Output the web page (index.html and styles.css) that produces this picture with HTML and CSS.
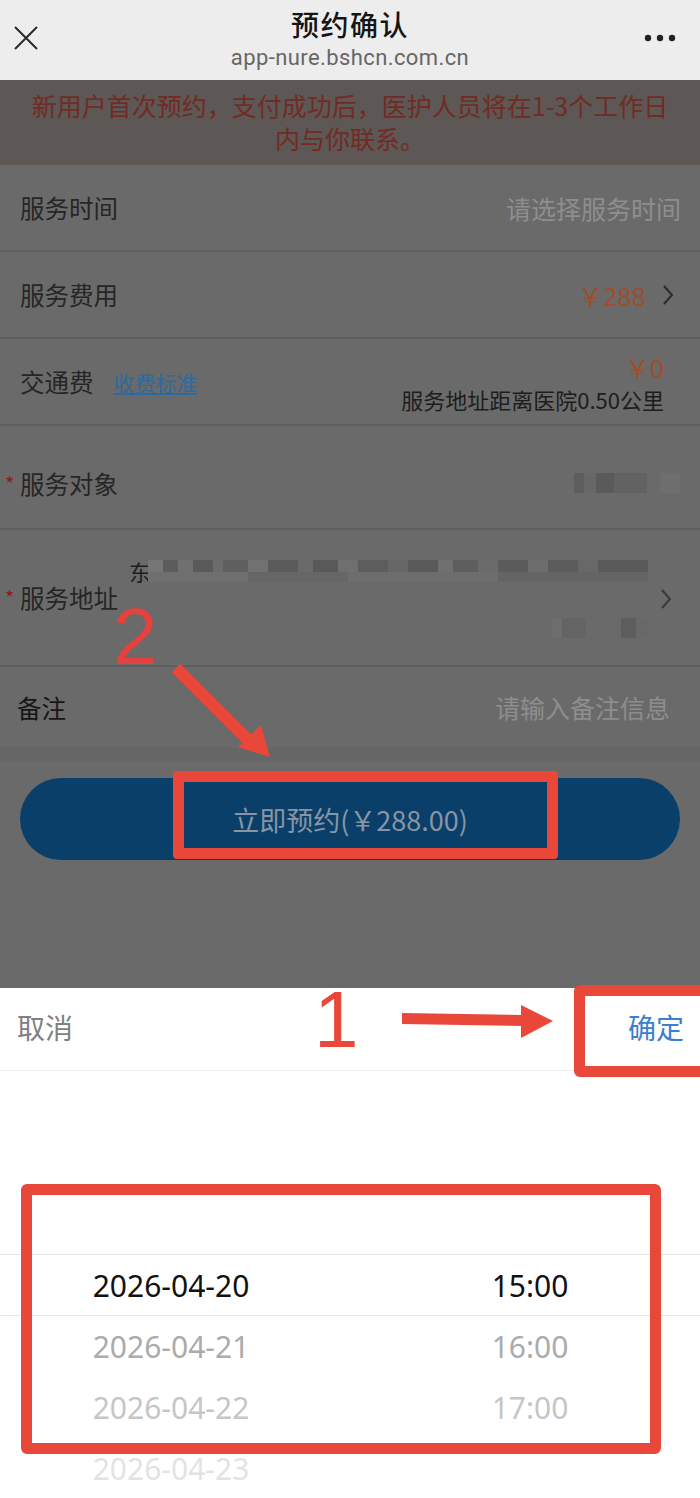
FILE: index.html
```html
<!DOCTYPE html>
<html lang="zh-CN">
<head>
<meta charset="utf-8">
<title>预约确认</title>
<link rel="stylesheet" href="styles.css">
</head>
<body>
<div class="phone">
  <header class="topbar">
    <svg class="close" width="26" height="24" viewBox="0 0 26 24"><path d="M2 1L24 23M24 1L2 23" stroke="#2a2a2a" stroke-width="2" fill="none"/></svg>
    <div class="titles">
      <div class="title">预约确认</div>
      <div class="url">app-nure.bshcn.com.cn</div>
    </div>
    <svg class="more" width="32" height="8" viewBox="0 0 32 8"><circle cx="4" cy="4" r="3.2" fill="#222"/><circle cx="16" cy="4" r="3.2" fill="#222"/><circle cx="28" cy="4" r="3.2" fill="#222"/></svg>
  </header>

  <main class="page">
    <div class="notice">新用户首次预约，支付成功后，医护人员将在1-3个工作日<br>内与你联系。</div>

    <section class="group">
      <div class="row">
        <span class="label">服务时间</span>
        <span class="placeholder">请选择服务时间</span>
      </div>
      <div class="row fee-row">
        <span class="label">服务费用</span>
        <span class="value"><span class="price">￥288</span><svg class="chev" width="12" height="22" viewBox="0 0 12 22"><path d="M2 2L10 11L2 20" stroke="#2b2b2b" stroke-width="2" fill="none"/></svg></span>
      </div>
      <div class="row">
        <span class="label">交通费<a class="link">收费标准</a></span>
        <div class="fee">
          <span class="price">￥0</span>
          <span class="dist">服务地址距离医院0.50公里</span>
        </div>
      </div>
    </section>

    <section class="group second">
      <div class="row obj">
        <span class="label"><i class="req">*</i>服务对象</span>
        <span class="value"><span class="blur name"></span><span class="blur faint"></span></span>
      </div>
      <div class="row addr">
        <span class="label"><i class="req">*</i>服务地址</span>
        <span class="value">
          <span class="addr-lines">
            <span class="line1"><span class="ch">东</span><span class="blur band"></span></span>
            <span class="blur band2"></span>
          </span>
          <svg class="chev dim" width="12" height="22" viewBox="0 0 12 22"><path d="M2 2L10 11L2 20" stroke="#3a3a3a" stroke-width="2" fill="none"/></svg>
        </span>
      </div>
      <div class="row memo">
        <span class="label dark">备注</span>
        <span class="placeholder">请输入备注信息</span>
      </div>
    </section>

    <div class="btn-area">
      <button class="submit">立即预约(￥288.00)</button>
    </div>
  </main>

  <div class="picker">
    <div class="picker-head">
      <span class="cancel">取消</span>
      <span class="ok">确定</span>
    </div>
    <div class="picker-body">
      <div class="prow"></div>
      <div class="prow"></div>
      <div class="prow"></div>
      <div class="prow sel"><span>2026-04-20</span><span>15:00</span></div>
      <div class="prow n1"><span>2026-04-21</span><span>16:00</span></div>
      <div class="prow n2"><span>2026-04-22</span><span>17:00</span></div>
      <div class="prow n3"><span>2026-04-23</span><span></span></div>
    </div>
  </div>

  <!-- annotations -->
  <div class="mark mark-btn"></div>
  <div class="mark mark-ok"></div>
  <div class="mark mark-picker"></div>
  <span class="num num-2">2</span>
  <span class="num num-1">1</span>
  <svg class="arrow arrow-2" width="120" height="120" viewBox="0 0 120 120">
    <path d="M6 8L80 82" stroke="#e8473a" stroke-width="12" stroke-linecap="butt"/>
    <polygon points="68,87 91,65 100,97" fill="#e8473a"/>
  </svg>
  <svg class="arrow arrow-1" width="170" height="50" viewBox="0 0 170 50">
    <polygon points="2,13 123,15 123,26 2,24" fill="#e8473a"/>
    <polygon points="121,5 153,21 121,38" fill="#e8473a"/>
  </svg>
</div>
</body>
</html>
```

FILE: styles.css
```css
* { box-sizing: border-box; }
html, body { margin: 0; padding: 0; }
body {
  font-family: "Noto Sans CJK SC", "Noto Sans", sans-serif;
  background: #fff;
}
.phone {
  position: relative;
  width: 700px;
  height: 1498px;
  overflow: hidden;
  background: #fff;
}

/* header */
.topbar {
  height: 80px;
  background: #ededed;
  display: grid;
  grid-template-columns: 80px 1fr 80px;
  align-items: center;
}
.close { margin-left: 13px; margin-top: -4px; }
.more { justify-self: end; margin-right: 24px; margin-top: -4px; }
.titles {
  display: flex;
  flex-direction: column;
  align-items: center;
  margin-top: -2px;
}
.title {
  font-size: 28px;
  line-height: 38px;
  font-weight: 500;
  color: #151515;
  letter-spacing: 1.5px;
}
.url {
  font-family: "Roboto", "Noto Sans", sans-serif;
  font-size: 22px;
  line-height: 30px;
  color: #666;
  letter-spacing: 0.4px;
}

/* dimmed page */
.page {
  height: 908px;
  background: #6a6a6a;
  overflow: hidden;
}
.notice {
  background: #5d5755;
  color: #722b22;
  font-size: 25px;
  line-height: 33px;
  text-align: center;
  padding: 9px 10px 10px;
}
.group { background: #6a6a6a; }
.group.second { margin-top: 12px; }
.row {
  height: 87px;
  padding: 0 19px 0 20px;
  display: flex;
  align-items: center;
  justify-content: space-between;
  border-bottom: 2px solid #5f5f5f;
}
.row.fee-row { padding-right: 26px; }
.label {
  font-size: 24.5px;
  color: #262626;
  display: flex;
  align-items: center;
  position: relative;
}
.label.dark { color: #161616; margin-left: -3px; }
.req {
  font-style: normal;
  color: #8c1c1c;
  font-size: 20px;
  position: absolute;
  left: -15px;
  top: 3px;
}
.link {
  font-size: 21px;
  color: #2f6a9c;
  text-decoration: underline;
  margin-left: 20px;
}
.placeholder {
  font-size: 25px;
  color: #8e8e8e;
}
.value {
  display: flex;
  align-items: center;
}
.price {
  font-family: "Noto Sans", sans-serif;
  font-size: 25px;
  color: #a04d2b;
}
.chev { margin-left: 16px; }
.fee {
  display: flex;
  flex-direction: column;
  align-items: flex-end;
  padding-right: 17px;
  margin-top: 4px;
}
.fee .price { line-height: 30px; }
.dist {
  font-size: 22px;
  line-height: 32px;
  color: #1d1d1d;
}

.row.obj { height: 92px; padding-right: 20px; }
.blur { display: block; }
.blur.name {
  width: 73px;
  height: 20px;
  background:
    linear-gradient(90deg, #5d5d5d 0 14%, #676767 14% 30%, #5a5a5a 30% 55%, #626262 55% 100%);
}
.blur.faint {
  width: 20px;
  height: 20px;
  margin-left: 13px;
  background: #6e6e6e;
}

.row.addr { height: 137px; padding-right: 28px; }
.addr-lines {
  display: flex;
  flex-direction: column;
  align-items: flex-end;
  gap: 31px;
  margin-top: -2px;
}
.line1 { display: flex; align-items: center; }
.ch { font-size: 22px; color: #1f1f1f; margin-right: -3px; }
.blur.band {
  width: 500px;
  height: 22px;
  background:
    linear-gradient(90deg,
      #767676 0 3%, #5c5c5c 3% 6%, #707070 6% 9%, #5a5a5a 9% 13%, #6c6c6c 13% 15%,
      #5f5f5f 15% 20%, #727272 20% 24%, #5b5b5b 24% 30%, #6a6a6a 30% 33%, #595959 33% 38%,
      #6f6f6f 38% 42%, #5d5d5d 42% 48%, #676767 48% 52%, #5a5a5a 52% 58%, #707070 58% 61%,
      #5e5e5e 61% 66%, #6b6b6b 66% 70%, #5b5b5b 70% 76%, #6d6d6d 76% 80%, #5c5c5c 80% 86%,
      #686868 86% 90%, #5a5a5a 90% 100%) top / 100% 55% no-repeat,
    linear-gradient(90deg, #6f6f6f 0 20%, #666 20% 40%, #6d6d6d 40% 70%, #646464 70% 100%) bottom / 100% 45% no-repeat;
}
.blur.band2 {
  width: 96px;
  height: 20px;
  background: linear-gradient(90deg, #6e6e6e 0 10%, #646464 10% 35%, #6a6a6a 35% 72%, #5d5d5d 72% 88%, #686868 88% 100%);
}
.chev.dim { margin-left: 12px; margin-top: 2px; }

.row.memo { height: 80px; padding-right: 30px; border-bottom: 0; }

.btn-area {
  padding: 17px 20px 0;
  border-top: 14px solid #666;
}
.submit {
  display: block;
  width: 100%;
  height: 82px;
  border: 0;
  border-radius: 41px;
  background: #0a3f69;
  color: #8795a4;
  font-family: "Noto Sans CJK SC", "Noto Sans", sans-serif;
  font-size: 27px;
  padding: 0;
}

/* picker */
.picker { height: 510px; background: #fff; }
.picker-head {
  height: 83px;
  display: flex;
  align-items: center;
  justify-content: space-between;
  padding: 0 16px 0 17px;
  border-bottom: 1px solid #ececec;
}
.cancel { font-size: 28px; color: #808080; margin-top: -4px; }
.ok { font-size: 28px; color: #3b7fce; margin-top: -4px; }
.picker-body { display: flex; flex-direction: column; }
.prow {
  height: 61px;
  display: grid;
  grid-template-columns: 342px 340px;
  column-gap: 18px;
  align-items: center;
  font-family: "Noto Sans", sans-serif;
  font-size: 30px;
  text-align: center;
}
.prow.sel {
  height: 62px;
  border-top: 1px solid #e6e6e6;
  border-bottom: 1px solid #e6e6e6;
  color: #111;
}
.prow.n1 { color: #ababab; }
.prow.n2 { color: #c6c6c6; }
.prow.n3 { color: #e3e3e3; }

/* annotations */
.mark {
  position: absolute;
  border: 11px solid #e8473a;
  border-radius: 6px;
}
.mark-btn { left: 173px; top: 771px; width: 385px; height: 88px; border-radius: 4px; }
.mark-ok { left: 574px; top: 985px; width: 140px; height: 92px; }
.mark-picker { left: 21px; top: 1184px; width: 640px; height: 270px; }
.num {
  position: absolute;
  font-family: "Liberation Sans", sans-serif;
  font-size: 80px;
  line-height: 80px;
  color: #e8473a;
}
.num-2 { left: 113px; top: 597px; color: #e6413e; }
.num-1 { left: 314px; top: 980px; }
.arrow { position: absolute; }
.arrow-2 { left: 170px; top: 660px; }
.arrow-1 { left: 400px; top: 1000px; }
```
